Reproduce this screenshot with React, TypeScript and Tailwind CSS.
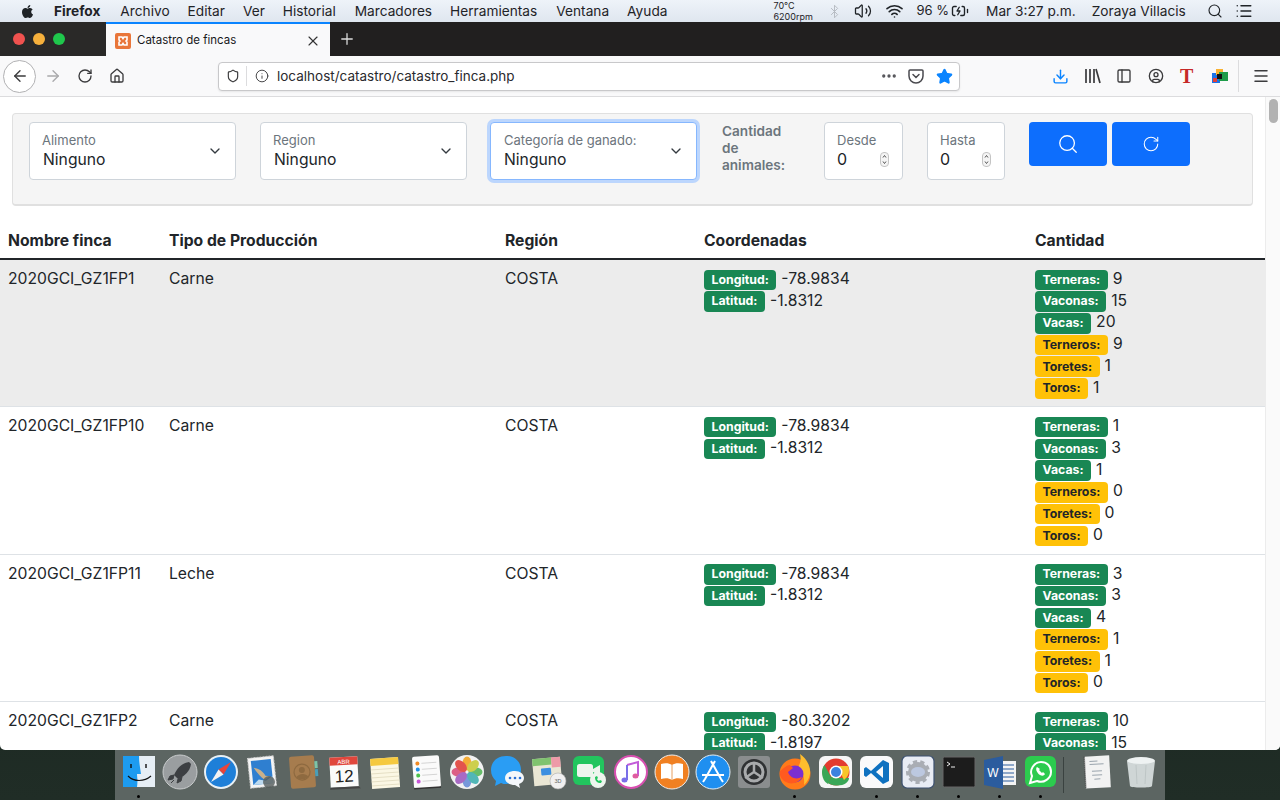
import { ReactNode } from 'react';
import {
  ArrowLeft,
  ArrowRight,
  ChevronDown,
  CircleUser,
  Download,
  Home,
  Info,
  Menu,
  PanelLeft,
  Plus,
  RotateCw,
  Search,
  Star,
  Volume2,
  Wifi,
  X,
  Bluetooth,
  List,
  BatteryCharging,
  Shield,
  Ellipsis,
  RotateCcw,
} from 'lucide-react';
import { FaApple } from 'react-icons/fa';

const menus = [
  { label: 'Archivo', cls: 'ml-[20px]' },
  { label: 'Editar', cls: 'ml-[18px]' },
  { label: 'Ver', cls: 'ml-[18px]' },
  { label: 'Historial', cls: 'ml-[18px]' },
  { label: 'Marcadores', cls: 'ml-[19px]' },
  { label: 'Herramientas', cls: 'ml-[18px]' },
  { label: 'Ventana', cls: 'ml-[19px]' },
  { label: 'Ayuda', cls: 'ml-[18px]' },
];

type Finca = {
  nombre: string;
  tipo: string;
  lon: string;
  lat: string;
  cant: number[];
};

const fincas: Finca[] = [
  { nombre: '2020GCI_GZ1FP1', tipo: 'Carne', lon: '-78.9834', lat: '-1.8312', cant: [9, 15, 20, 9, 1, 1] },
  { nombre: '2020GCI_GZ1FP10', tipo: 'Carne', lon: '-78.9834', lat: '-1.8312', cant: [1, 3, 1, 0, 0, 0] },
  { nombre: '2020GCI_GZ1FP11', tipo: 'Leche', lon: '-78.9834', lat: '-1.8312', cant: [3, 3, 4, 1, 1, 0] },
  { nombre: '2020GCI_GZ1FP2', tipo: 'Carne', lon: '-80.3202', lat: '-1.8197', cant: [10, 15, 0, 0, 0, 0] },
];

const animales = ['Terneras:', 'Vaconas:', 'Vacas:', 'Terneros:', 'Toretes:', 'Toros:'];

function Badge({ label, value, yellow }: { label: string; value: string | number; yellow?: boolean }) {
  return (
    <div className="flex h-[21.72px] items-center">
      <span
        className={`flex h-[20.5px] items-center rounded-[4px] px-[7.5px] text-[12.3px] font-bold ${
          yellow ? 'bg-[#ffc107] text-[#212529]' : 'bg-[#198754] text-white'
        }`}
      >
        {label}
      </span>
      <span className="mb-[2px] ml-[5px] text-[15.7px] leading-none text-[#212529]">{value}</span>
    </div>
  );
}

function FloatingSelect({ label, focus }: { label: string; focus?: boolean }) {
  return (
    <div
      className={`relative h-[58px] w-[207px] rounded-[4px] border bg-white pt-[8px] ${
        focus ? 'border-[#86b7fe] pl-[13px] shadow-[0_0_0_3px_#bcd6fd]' : 'border-[#ced4da] pl-[12px]'
      }`}
    >
      <div className="text-[13px] leading-[18px] text-[#6c757d]">{label}</div>
      <div className={`mt-[1px] text-[15.7px] leading-[20px] text-[#212529] ${focus ? '' : 'ml-[1px]'}`}>Ninguno</div>
      <ChevronDown className="absolute right-[12px] top-[20px] h-[16px] w-[16px] text-[#343a40]" strokeWidth={2} />
    </div>
  );
}

function NumberBox({ label, cls }: { label: string; cls: string }) {
  return (
    <div className={`relative h-[58px] rounded-[4px] border border-[#ced4da] bg-white pl-[12px] pt-[8px] ${cls}`}>
      <div className="text-[13px] leading-[18px] text-[#6c757d]">{label}</div>
      <div className="text-[16px] leading-[20px] text-[#212529]">0</div>
      <svg className="absolute right-[13px] top-[29px] h-[15px] w-[9px]" viewBox="0 0 9 15" fill="none">
        <rect x=".5" y=".5" width="8" height="14" rx="3.500" fill="#f4f4f4" stroke="#c4c4c4" />
        <path d="M3 5.500l1.500-2 1.500 2M3 9.500l1.500 2 1.500-2" stroke="#444" strokeWidth=".9" />
      </svg>
    </div>
  );
}

function Icon({ children, dot }: { children: ReactNode; dot?: boolean }) {
  return (
    <div className="relative flex h-[50px] w-[41px] shrink-0 items-start justify-center pt-[3px]">
      <svg width="38" height="38" viewBox="0 0 38 38">
        {children}
      </svg>
      {dot && <span className="absolute bottom-[2px] left-[19px] h-[3px] w-[3px] rounded-full bg-black" />}
    </div>
  );
}

function Dock() {
  return (
    <div className="absolute bottom-0 left-[115px] flex h-[50px] w-[1050px] bg-[#5c6562] pl-[3px]">
      {/* finder */}
      <Icon dot>
        <rect x="3" y="3" width="32" height="31" fill="#1d9bf0" />
        <path d="M19 3h16v31H17c1-7 0-10 0-13h4c-1-7-2-12-2-18z" fill="#e6eef5" />
        <path d="M8 23c6 6 16 6 23 0" fill="none" stroke="#111" strokeWidth="1.2" />
        <path d="M11 11v4M26 11v4" stroke="#111" strokeWidth="1.4" />
      </Icon>
      {/* launchpad */}
      <Icon>
        <circle cx="19" cy="19" r="17" fill="#9a9ea0" stroke="#c9cccd" strokeWidth="1" />
        <path d="M28 9c-7 1-12 6-15 13l4 4c7-3 12-8 13-15z" fill="#3c3f42" />
        <path d="M13 22l-4 1-2 4 5-1zM17 26l-1 4 4-2 1-4zM13 27l-3 3" fill="#3c3f42" stroke="#3c3f42" />
      </Icon>
      {/* safari */}
      <Icon>
        <circle cx="19" cy="19" r="17" fill="#e8f0f5" />
        <circle cx="19" cy="19" r="15" fill="#1e7fd8" />
        <path d="M29 9L16.5 16.5 21.500 21.500z" fill="#e8443a" />
        <path d="M9 29l7.500-12.500 5 5z" fill="#f2f2f2" />
      </Icon>
      {/* mail */}
      <Icon>
        <g transform="rotate(-6 19 19)">
          <rect x="6" y="4" width="26" height="30" fill="#f4f4f4" stroke="#ccc" strokeDasharray="2 1" />
          <rect x="9" y="7" width="20" height="24" fill="#2f7fd0" />
          <path d="M11 14c5 1 9 4 11 9l5 1-6 3c-4-3-6-7-10-13z" fill="#c9b08a" />
          <path d="M9 31l6-5 7 2 7-4v7z" fill="#bcd9ee" />
        </g>
        <circle cx="26" cy="29" r="6" fill="#555d5b" opacity=".8" />
      </Icon>
      {/* contacts */}
      <Icon>
        <g transform="rotate(-4 19 19)">
          <rect x="6" y="3" width="25" height="32" rx="2" fill="#a67c4e" />
          <rect x="31" y="9" width="3" height="7" fill="#7cc4a8" />
          <rect x="31" y="17" width="3" height="7" fill="#4a9fb8" />
          <circle cx="18" cy="19" r="8" fill="none" stroke="#8e6a40" strokeWidth="1.200" />
          <circle cx="18" cy="17" r="3" fill="#8e6a40" />
          <path d="M12 24c2-4 10-4 12 0-3 3-9 3-12 0z" fill="#8e6a40" />
        </g>
      </Icon>
      {/* calendar */}
      <Icon>
        <g transform="rotate(-3 19 19)">
          <rect x="5" y="4" width="28" height="30" fill="#fafafa" />
          <rect x="5" y="4" width="28" height="8" fill="#e0463c" />
          <path d="M5 34h28l2 2H4z" fill="#444" />
          <text x="19" y="11" textAnchor="middle" fontSize="6" fill="#fff" fontFamily="Liberation Sans, sans-serif">
            ABR
          </text>
          <text x="19" y="29" textAnchor="middle" fontSize="17" fill="#222" fontFamily="Liberation Sans, sans-serif">
            12
          </text>
        </g>
      </Icon>
      {/* notes */}
      <Icon>
        <g transform="rotate(-4 19 19)">
          <rect x="5" y="5" width="28" height="30" fill="#fbf7e4" />
          <rect x="5" y="5" width="28" height="7" fill="#f5c93f" />
          <path d="M5 16h28M5 20h28M5 24h28M5 28h28M5 32h28" stroke="#ddd6b8" strokeWidth=".7" />
        </g>
      </Icon>
      {/* reminders */}
      <Icon>
        <g transform="rotate(-4 19 19)">
          <rect x="6" y="3" width="27" height="32" rx="2" fill="#fafafa" />
          <path d="M6 35h27" stroke="#333" strokeWidth="1.500" />
          <circle cx="11" cy="10" r="2" fill="#f08a24" />
          <circle cx="11" cy="16" r="2" fill="#1e8fe8" />
          <circle cx="11" cy="22" r="2" fill="#4cc04c" />
          <circle cx="11" cy="28" r="2" fill="#c855d8" />
          <path d="M15 10h15M15 16h15M15 22h15M15 28h15" stroke="#ccc" strokeWidth=".8" />
        </g>
      </Icon>
      {/* photos */}
      <Icon>
        <circle cx="19" cy="19" r="17" fill="#f2f2f2" />
        <g opacity=".9">
          <ellipse cx="19" cy="10.500" rx="4.500" ry="7" fill="#f5a623" />
          <ellipse cx="19" cy="27.500" rx="4.500" ry="7" fill="#6a8fd8" />
          <ellipse cx="10.500" cy="19" rx="7" ry="4.500" fill="#d94f7a" />
          <ellipse cx="27.500" cy="19" rx="7" ry="4.500" fill="#58b85c" />
          <ellipse cx="13" cy="13" rx="7" ry="4.500" fill="#e2443c" transform="rotate(45 13 13)" />
          <ellipse cx="25" cy="13" rx="7" ry="4.500" fill="#c9cc3c" transform="rotate(-45 25 13)" />
          <ellipse cx="13" cy="25" rx="7" ry="4.500" fill="#a05cc0" transform="rotate(-45 13 25)" />
          <ellipse cx="25" cy="25" rx="7" ry="4.500" fill="#40b0b0" transform="rotate(45 25 25)" />
        </g>
      </Icon>
      {/* messages */}
      <Icon>
        <path d="M17 3C8 3 2 9 2 17c0 5 2 8 5 11l-1 5 6-3c2 1 3 1 5 1 9 0 15-6 15-14S26 3 17 3z" fill="#2a9df4" />
        <path d="M26 18c-6 0-10 3-10 7s4 7 10 7l5 3-1-4c3-1 5-3 5-6 0-4-4-7-9-7z" fill="#f4f7fa" />
        <circle cx="21" cy="25" r="1.300" fill="#2a6fd4" />
        <circle cx="26" cy="25" r="1.300" fill="#2a6fd4" />
        <circle cx="31" cy="25" r="1.300" fill="#2a6fd4" />
      </Icon>
      {/* maps */}
      <Icon>
        <g transform="rotate(-5 17 17)">
          <rect x="3" y="5" width="28" height="27" fill="#e9e6d4" />
          <rect x="3" y="5" width="19" height="7" fill="#7fc36f" />
          <rect x="22" y="5" width="9" height="10" fill="#ee9aa8" />
          <rect x="11" y="15" width="10" height="7" rx="1" fill="#3c8fe0" />
        </g>
        <circle cx="28" cy="28" r="8" fill="#f0f0f0" stroke="#aaa" strokeWidth=".6" />
        <text x="28" y="30" textAnchor="middle" fontSize="5.500" fill="#666" fontFamily="Liberation Sans, sans-serif">
          3D
        </text>
      </Icon>
      {/* facetime */}
      <Icon>
        <rect x="2" y="3" width="31" height="29" rx="6" fill="#22c55e" />
        <rect x="6" y="11" width="16" height="13" rx="2.500" fill="#eef5ee" />
        <path d="M22 16l7-4v11l-7-4z" fill="#eef5ee" />
        <circle cx="27" cy="27" r="8" fill="#eef5ee" />
        <path d="M24 24c0 4 2 6 6 6l1-2-2-1-1 1c-1-.5-2-1.500-2-2l1-1-1-2z" fill="#22c55e" />
      </Icon>
      {/* itunes */}
      <Icon>
        <circle cx="19" cy="19" r="16" fill="#fff" stroke="#d84fb0" strokeWidth="2" />
        <path d="M15 12l11-3v14" fill="none" stroke="#c25cd8" strokeWidth="2" />
        <path d="M15 12v15" stroke="#7a6fe8" strokeWidth="2" />
        <ellipse cx="12.500" cy="27" rx="3" ry="2.500" fill="#7a6fe8" />
        <ellipse cx="23.500" cy="23" rx="3" ry="2.500" fill="#e05ca0" />
      </Icon>
      {/* books */}
      <Icon>
        <circle cx="19" cy="19" r="17" fill="#f08022" stroke="#eee" strokeWidth="1" />
        <path d="M19 12c-3-2-7-2-11-1v15c4-1 8-1 11 1 3-2 7-2 11-1V11c-4-1-8-1-11 1z" fill="#fff" />
        <path d="M19 12v15" stroke="#e8a060" strokeWidth="1" />
      </Icon>
      {/* app store */}
      <Icon>
        <circle cx="19" cy="19" r="17" fill="#1f8ff0" stroke="#e4edf5" strokeWidth="1" />
        <path d="M21 8L11 26M17 8l10 18M8 22h22M11 26l-2 3M27 26l2 3" stroke="#fff" strokeWidth="2" fill="none" />
      </Icon>
      {/* system preferences */}
      <Icon>
        <rect x="3" y="3" width="32" height="32" rx="3" fill="#8a8d8e" />
        <circle cx="19" cy="19" r="13" fill="#2f3133" />
        <circle cx="19" cy="19" r="9" fill="none" stroke="#a8aaac" strokeWidth="3" />
        <path d="M19 19V9M19 19l-9 6M19 19l9 6" stroke="#a8aaac" strokeWidth="2.500" />
      </Icon>
      {/* firefox */}
      <Icon dot>
        <circle cx="19" cy="21" r="15.500" fill="#ff7a1a" />
        <path d="M24 1c6 4 11 12 10 20-1 5-3 8-6 11 1-8-2-14-6-18 3-4 3-9 2-13z" fill="#ffbd2e" />
        <circle cx="19" cy="21" r="8.500" fill="#7b2fd0" />
        <path d="M4 18c4-3 7-6 10-6l3 3-5 4c2 6 8 8 14 5-3 6-11 8-16 5-4-2-7-6-6-11z" fill="#ff5a1f" />
      </Icon>
      {/* chrome */}
      <Icon>
        <rect x="2" y="3" width="33" height="32" rx="6" fill="#f5f5f5" />
        <circle cx="19" cy="19" r="13.500" fill="#e33b2e" />
        <path d="M7.500 12L14 24l-3 7c-4-2-6-7-6-12 0-3 1-5 2.500-7z" fill="#3aa757" />
        <path d="M19 25h13c0 4-5 8-13 7.500-3 0-6-1-8-2.500l6-11z" fill="#3aa757" />
        <path d="M19 13h12c2 4 1 10-3 13l-1 1-4-8z" fill="#f7c52b" />
        <circle cx="19" cy="19" r="6.500" fill="#fff" />
        <circle cx="19" cy="19" r="5" fill="#3b82e0" />
      </Icon>
      {/* vscode */}
      <Icon dot>
        <rect x="2" y="3" width="33" height="32" rx="6" fill="#fafafa" />
        <path d="M25 7l6 3v18l-6 3L13 20l-5 4-2-1.500V15.500L8 14l5 4z" fill="#0f72c0" />
        <path d="M25 13l-7 6 7 6z" fill="#fafafa" />
      </Icon>
      {/* gear app */}
      <Icon dot>
        <rect x="3" y="3" width="32" height="32" rx="5" fill="#e8ecf4" stroke="#3d5170" strokeWidth="1.200" />
        <circle cx="19" cy="19" r="10" fill="#a9adb4" stroke="#a9adb4" strokeWidth="4" strokeDasharray="4 3" />
        <ellipse cx="19" cy="19" rx="7" ry="5" fill="#bcc8e0" />
      </Icon>
      {/* terminal */}
      <Icon dot>
        <rect x="3" y="4" width="32" height="30" rx="1.500" fill="#1c1c1c" stroke="#666" strokeWidth="1" />
        <path d="M7 9l3 2-3 2M11 14h4" stroke="#eee" strokeWidth="1" fill="none" />
      </Icon>
      {/* word */}
      <Icon dot>
        <rect x="19" y="8" width="16" height="24" fill="#f4f4f4" />
        <path d="M22 12h11M22 16h11M22 20h11M22 24h11M22 28h11" stroke="#2b5c9e" strokeWidth="1.200" />
        <path d="M3 7l19-4v33L3 32z" fill="#2b5c9e" />
        <text x="12" y="24" textAnchor="middle" fontSize="12" fill="#fff" fontFamily="Liberation Sans, sans-serif">
          W
        </text>
      </Icon>
      {/* whatsapp */}
      <Icon dot>
        <rect x="3" y="3" width="31" height="31" rx="6" fill="#2ccb4e" />
        <path d="M8 30l2-7c-3-6 2-14 9-14 6 0 10 4 10 10s-7 12-14 9z" fill="none" stroke="#fff" strokeWidth="2" />
        <path d="M15 14c-2 2 0 6 3 8 2 1 4 1 5-1l-2-2-1 1-3-3 1-1z" fill="#fff" />
      </Icon>
      <div className="ml-[2px] mr-[12px] mt-[7px] h-[36px] w-px bg-[#3a4240]" />
      {/* document stack */}
      <Icon>
        <g transform="rotate(-3 19 19)">
          <rect x="7" y="3" width="25" height="32" fill="#f2f2f2" />
          <path d="M7 3v32" stroke="#444" strokeWidth="1.500" strokeDasharray="1 1" />
          <path d="M12 8h8M12 11h14M14 18h10M14 22h10M16 26h6" stroke="#9aa4ad" strokeWidth="1" />
        </g>
      </Icon>
      <div className="w-[3px]" />
      {/* trash */}
      <Icon>
        <ellipse cx="19" cy="8" rx="14" ry="4" fill="#eef2f2" />
        <path d="M5 8l3 25c0 2 22 2 22 0l3-25c-3 4-25 4-28 0z" fill="#cfd6d6" />
        <path d="M14 12l1 19M24 12l-1 19" stroke="#b9c1c1" strokeWidth=".8" />
      </Icon>
    </div>
  );
}

export default function App() {
  return (
    <div className="relative flex h-[800px] w-[1280px] flex-col overflow-hidden bg-gradient-to-b from-[#0b1512] to-[#202d26] font-['Inter',sans-serif] text-[#212529]">
      {/* menu bar */}
      <div className="flex h-[22px] shrink-0 items-center bg-gradient-to-b from-[#eef3f9] to-[#dfe6ef] pl-[20px] text-[13.7px] text-[#1f2327]">
        <FaApple className="h-[15px] w-[15px]" />
        <span className="ml-[19px] font-bold">Firefox</span>
        {menus.map((m) => (
          <span key={m.label} className={m.cls}>
            {m.label}
          </span>
        ))}
        <div className="ml-[106px] flex w-[46px] flex-col text-[9px] leading-[11px]">
          <span>70°C</span>
          <span>6200rpm</span>
        </div>
        <Bluetooth className="ml-[8px] h-[15px] w-[15px] text-[#b4bac0]" strokeWidth={1.5} />
        <Volume2 className="ml-[11px] h-[18px] w-[20px]" strokeWidth={1.7} />
        <Wifi className="ml-[11px] h-[18px] w-[21px]" strokeWidth={2.2} />
        <span className="ml-[11px] text-[13px]">96 %</span>
        <BatteryCharging className="h-[18px] w-[22px]" strokeWidth={1.8} />
        <span className="ml-[15px]">Mar 3:27 p.m.</span>
        <span className="ml-[16px]">Zoraya Villacis</span>
        <Search className="ml-[21px] h-[16px] w-[16px]" strokeWidth={1.7} />
        <List className="ml-[12px] h-[18px] w-[18px]" strokeWidth={2} />
      </div>

      {/* tab bar */}
      <div className="flex h-[34px] shrink-0 items-center bg-[#211f1f]">
        <div className="flex h-full w-[106px] items-center gap-[8px] bg-[#2a2928] pl-[13px]">
          <span className="h-[12px] w-[12px] rounded-full bg-[#f0524f]" />
          <span className="h-[12px] w-[12px] rounded-full bg-[#f6b03c]" />
          <span className="h-[12px] w-[12px] rounded-full bg-[#1fc74c]" />
        </div>
        <div className="flex h-full w-[224px] items-center border-t-2 border-[#0a84ff] bg-[#f9f9fa] pl-[9px] pt-[2px]">
          <svg className="h-[16px] w-[16px]" viewBox="0 0 16 16">
            <rect width="16" height="16" rx="2" fill="#e9763a" />
            <path
              d="M4 4h3l1 1.500L9 4h3v3l-1 1 1 1v3H9L8 10.500 7 12H4V9l1-1-1-1z"
              fill="none"
              stroke="#fff"
              strokeWidth="1.600"
            />
          </svg>
          <span className="ml-[6px] text-[11.5px] text-[#18181a]">Catastro de fincas</span>
          <X className="ml-auto mr-[9px] h-[16px] w-[16px] text-[#333]" strokeWidth={1.7} />
        </div>
        <Plus className="ml-[8px] h-[18px] w-[18px] text-[#dcdcdc]" strokeWidth={1.7} />
      </div>

      {/* toolbar */}
      <div className="flex h-[41px] shrink-0 items-center border-b border-[#dcdcde] bg-[#f9f9fa] pl-[3px] text-[#3b3b3d]">
        <div className="flex h-[33px] w-[33px] items-center justify-center rounded-full border border-[#b1b1b3] bg-white">
          <ArrowLeft className="h-[18px] w-[18px]" strokeWidth={1.8} />
        </div>
        <ArrowRight className="ml-[8px] h-[18px] w-[18px] text-[#a9a9ab]" strokeWidth={1.8} />
        <RotateCw className="ml-[15px] h-[16px] w-[16px]" strokeWidth={2} />
        <Home className="ml-[16px] h-[16px] w-[16px]" strokeWidth={2} />
        <div className="ml-[93px] flex h-[29px] w-[742px] items-center rounded-[4px] border border-[#c8c8ca] bg-white pl-[7px] shadow-[0_1px_2px_rgba(0,0,0,0.08)]">
          <Shield className="h-[14px] w-[14px]" strokeWidth={2} />
          <div className="ml-[6px] h-[20px] w-px bg-[#dcdcde]" />
          <Info className="ml-[8px] h-[14px] w-[14px]" strokeWidth={1.6} />
          <span className="ml-[8px] text-[13.5px] text-[#2a2a2e]">localhost/catastro/catastro_finca.php</span>
          <Ellipsis className="ml-auto h-[18px] w-[18px] text-[#55555a]" strokeWidth={2.4} />
          <svg className="ml-[10px] h-[16px] w-[16px]" viewBox="0 0 16 16" fill="none" stroke="#4a4a4f" strokeWidth="1.500">
            <path d="M2 2h12a1 1 0 0 1 1 1v5a7 7 0 0 1-14 0V3a1 1 0 0 1 1-1z" />
            <path d="M5 6.500l3 3 3-3" strokeLinecap="round" />
          </svg>
          <Star className="ml-[12px] mr-[6px] h-[17px] w-[17px] fill-[#0a84ff] text-[#0a84ff]" />
        </div>
        <Download className="ml-[92px] h-[17px] w-[17px] text-[#0a84ff]" strokeWidth={2} />
        <svg className="ml-[15px] h-[16px] w-[17px]" viewBox="0 0 17 16" fill="none" stroke="#3b3b3d" strokeWidth="1.700">
          <path d="M2 1v14M6 1v14M10 1v14M12 1l4 14" />
        </svg>
        <PanelLeft className="ml-[15px] h-[16px] w-[16px]" strokeWidth={2} />
        <CircleUser className="ml-[16px] h-[16px] w-[16px]" strokeWidth={2} />
        <span className="ml-[16px] font-['Liberation_Serif',serif] text-[20px] font-bold leading-none text-[#c62828]">T</span>
        <svg className="ml-[19px] h-[14px] w-[16px]" viewBox="0 0 16 14">
          <rect x="0" y="4" width="8" height="10" fill="#1a73e8" />
          <rect x="4" y="0" width="7" height="6" fill="#f9b233" />
          <rect x="7" y="3" width="9" height="9" fill="#1e9c4a" />
          <rect x="5" y="5" width="5" height="5" fill="#111" />
          <rect x="1" y="9" width="4" height="4" fill="#e0403a" />
        </svg>
        <div className="ml-[10px] h-[32px] w-px bg-[#dcdcde]" />
        <Menu className="ml-[13px] h-[18px] w-[18px]" strokeWidth={2} />
      </div>

      {/* page */}
      <div className="flex h-[653px] shrink-0 overflow-hidden rounded-b-[5px] bg-white">
        <div className="w-[1265px] shrink-0">
          <div className="mx-[12px] mt-[16px] flex h-[93px] items-start rounded-[4px] border border-[#e0e0e0] border-b-2 bg-[#f5f5f5] pl-[16px] pt-[8px]">
            <FloatingSelect label="Alimento" />
            <div className="w-[24px]" />
            <FloatingSelect label="Region" />
            <div className="w-[23px]" />
            <FloatingSelect label="Categoría de ganado:" focus />
            <div className="ml-[25px] mt-[1px] w-[102px] text-[13.6px] font-semibold leading-[17px] text-[#6c757d]">
              Cantidad
              <br />
              de
              <br />
              animales:
            </div>
            <NumberBox label="Desde" cls="w-[79px]" />
            <div className="w-[24px]" />
            <NumberBox label="Hasta" cls="w-[78px]" />
            <button className="ml-[24px] flex h-[44px] w-[78px] items-center justify-center rounded-[4px] bg-[#0d6efd] text-white">
              <Search className="h-[22px] w-[22px]" strokeWidth={1.4} />
            </button>
            <button className="ml-[5px] flex h-[44px] w-[78px] items-center justify-center rounded-[4px] bg-[#0d6efd] text-white">
              <RotateCcw className="h-[18px] w-[18px] -scale-x-100" strokeWidth={1.4} />
            </button>
          </div>

          <table className="mt-[18px] w-[1265px] table-fixed border-collapse text-[15.7px]">
            <thead>
              <tr className="h-[35px] border-b-2 border-[#212529] text-left">
                <th className="w-[161px] px-[8px] font-bold">Nombre finca</th>
                <th className="w-[336px] px-[8px] font-bold">Tipo de Producción</th>
                <th className="w-[199px] px-[8px] font-bold">Región</th>
                <th className="w-[331px] px-[8px] font-bold">Coordenadas</th>
                <th className="px-[8px] font-bold">Cantidad</th>
              </tr>
            </thead>
            <tbody>
              {fincas.map((f, i) => (
                <tr key={f.nombre} className={`border-b border-[#dee2e6] ${i === 0 ? 'bg-[#ececec]' : ''}`}>
                  <td className="p-[8px] align-top leading-[21.72px]">{f.nombre}</td>
                  <td className="p-[8px] align-top leading-[21.72px]">{f.tipo}</td>
                  <td className="p-[8px] align-top leading-[21.72px]">COSTA</td>
                  <td className="px-[8px] pb-[7px] pt-[9px] align-top">
                    <Badge label="Longitud:" value={f.lon} />
                    <Badge label="Latitud:" value={f.lat} />
                  </td>
                  <td className="px-[8px] pb-[7px] pt-[9px] align-top">
                    {animales.map((a, j) => (
                      <Badge key={a} label={a} value={f.cant[j]} yellow={j > 2} />
                    ))}
                  </td>
                </tr>
              ))}
            </tbody>
          </table>
        </div>

        {/* scrollbar */}
        <div className="w-[15px] shrink-0 border-l border-[#ececec] bg-[#fafafa] pl-[3px] pt-[2px]">
          <div className="h-[24px] w-[9px] rounded-full bg-[#b2b2b2]" />
        </div>
      </div>

      <Dock />
    </div>
  );
}
